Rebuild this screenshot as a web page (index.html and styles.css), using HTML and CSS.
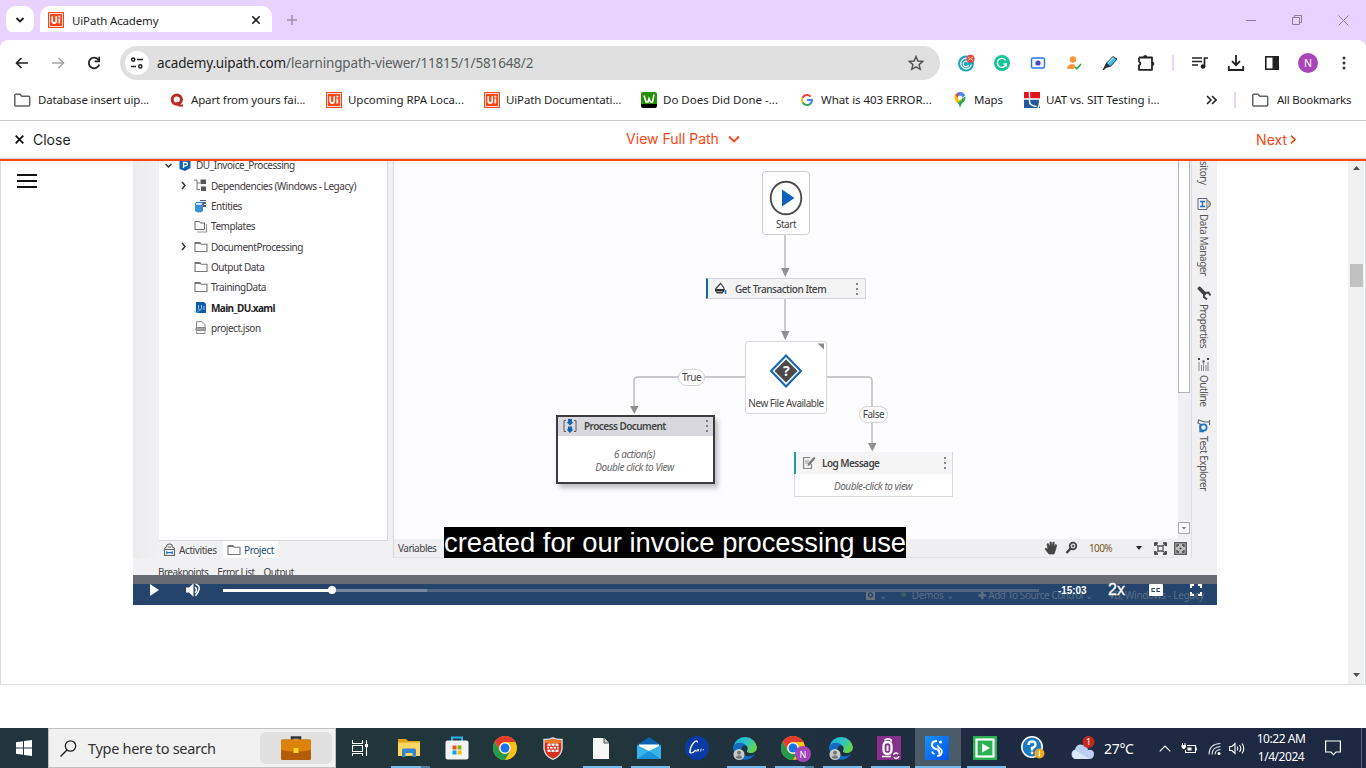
FILE: index.html
```html
<!DOCTYPE html>
<html lang="en">
<head>
<meta charset="utf-8">
<title>UiPath Academy</title>
<link rel="stylesheet" href="styles.css">
</head>
<body>
<svg class="defs" width="0" height="0">
  <defs>
    <symbol id="ui" viewBox="0 0 16 16"><rect width="16" height="16" fill="#fa4616"/><rect x="1.5" y="1.5" width="13" height="13" fill="none" stroke="#fde1d8" stroke-width="1"/><path d="M4.2 4.2v4.9q0 2 2 2t2-2V4.200M11.300 6.600v5" fill="none" stroke="#fff" stroke-width="1.700"/><rect x="10.400" y="3.700" width="1.900" height="1.800" fill="#fff"/></symbol>
    <symbol id="bfolder" viewBox="0 0 18 16"><path d="M1.800 13V3q0-.8.8-.8H7l1.800 2h7q.9 0 .9.900V13q0 .9-.9.900H2.600q-.8 0-.8-.9Z" fill="none" stroke="#5f6368" stroke-width="1.500"/></symbol>
    <symbol id="folder" viewBox="0 0 14 12"><path d="M1 10.500v-9h5l1.200 1.800H13v7.200Z" fill="none" stroke="#777" stroke-width="1.100"/><path d="M1 1.500h5l1 1.500H1Z" fill="#777"/></symbol>
    <symbol id="chrome" viewBox="0 0 24 24"><circle cx="12" cy="12" r="12" fill="#fbc116"/><path d="M1.600 6A12 12 0 0 1 22.400 6H12a6 6 0 0 0-5.200 9Z" fill="#e33b2e"/><path d="M1.600 6A12 12 0 0 0 12 24l5.200-9A6 6 0 0 1 6.800 15Z" fill="#229a4c"/><circle cx="12" cy="12" r="5.700" fill="#fff"/><circle cx="12" cy="12" r="4.500" fill="#1a73e8"/></symbol>
    <linearGradient id="eg" x1="0" y1="0" x2="1" y2=".5"><stop offset="0" stop-color="#26a9e8"/><stop offset=".6" stop-color="#2cc5c0"/><stop offset="1" stop-color="#68d34c"/></linearGradient>
    <linearGradient id="bb" x1="0" y1="0" x2="1" y2="1"><stop offset="0" stop-color="#1494fb"/><stop offset="1" stop-color="#0550e6"/></linearGradient>
    <symbol id="edge" viewBox="0 0 24 24"><path d="M.5 10A12 12 0 0 1 24 11c0 4-3 6-6.500 6-3 0-4-1.200-3.500-2.200 1.500-2 .6-6-3.500-6C6 8.800 3 12 1 17Z" fill="url(#eg)"/><path d="M.3 10C3 5.500 11 6 13 9.500 8 8.500 7 15 11 18.500c3.500 3 8 1.500 11-.5C19 23 14 24.500 9 23.500 2.500 22 0 16 .3 10Z" fill="#146cc0"/><circle cx="6" cy="18.500" r="5.500" fill="#c9c9c9"/><circle cx="6" cy="16.800" r="2" fill="#777"/><path d="M2.500 21.500q3.500-4.500 7 0-3.500 2.500-7 0Z" fill="#777"/></symbol>
    <symbol id="dots" viewBox="0 0 4 14"><circle cx="2" cy="2" r=".9" fill="#555"/><circle cx="2" cy="7" r=".9" fill="#555"/><circle cx="2" cy="12" r=".9" fill="#555"/></symbol>
  </defs>
</svg>

<header class="tabstrip">
  <button class="tab-search"><svg width="10" height="8" viewBox="0 0 10 8"><path d="M1.500 2 5 5.500 8.500 2" fill="none" stroke="#1f1f1f" stroke-width="1.900"/></svg></button>
  <div class="tab">
    <svg width="16" height="16"><use href="#ui"/></svg>
    <span class="tab-title">UiPath Academy</span>
    <svg class="tab-x" width="10" height="10" viewBox="0 0 10 10"><path d="m1.300 1.300 7.400 7.400m0-7.400L1.300 8.700" stroke="#222" stroke-width="1.600"/></svg>
  </div>
  <svg class="newtab" width="10" height="10" viewBox="0 0 10 10"><path d="M5 0v10M0 5h10" stroke="#9a8eaa" stroke-width="1.500"/></svg>
  <div class="winbtns">
    <svg width="10" height="11" viewBox="0 0 10 11"><path d="M0 5.500h10" stroke="#8a7f97"/></svg>
    <svg width="10" height="11" viewBox="0 0 10 11"><path d="M.5 2.500h7v7h-7ZM2.500 2.500v-2h7v7h-2" fill="none" stroke="#8a7f97"/></svg>
    <svg width="11" height="11" viewBox="0 0 11 11"><path d="m.5.5 10 10m0-10-10 10" stroke="#8a7f97"/></svg>
  </div>
</header>

<div class="toolbar">
  <div class="nav">
    <svg width="14" height="12" viewBox="0 0 14 12"><path d="M13 6H1.500M6.500 1l-5 5 5 5" fill="none" stroke="#222" stroke-width="1.700"/></svg>
    <svg width="14" height="12" viewBox="0 0 14 12"><path d="M1 6h11.500m-5-5 5 5-5 5" fill="none" stroke="#a5a5a8" stroke-width="1.500"/></svg>
    <svg width="14" height="14" viewBox="0 0 14 14"><path d="M12.200 8.500A5.300 5.300 0 1 1 11.500 4" fill="none" stroke="#222" stroke-width="1.800"/><path d="M12.200.8v4.600H7.600" fill="none" stroke="#222" stroke-width="1.700"/></svg>
  </div>
  <div class="omnibox">
    <span class="site"><svg width="14" height="12" viewBox="0 0 14 12"><g fill="none" stroke="#222" stroke-width="1.500"><circle cx="3.200" cy="2.600" r="1.600"/><path d="M7 2.600h6M1 9.400h5"/><circle cx="10.300" cy="9.400" r="1.600"/></g></svg></span>
    <span class="url"><b>academy.uipath.com</b>/learningpath-viewer/11815/1/581648/2</span>
    <svg class="star" width="16" height="16" viewBox="0 0 16 16"><path d="m8 1.500 1.900 4.500 4.900.4-3.700 3.200 1.100 4.700L8 11.800l-4.200 2.500 1.100-4.700L1.200 6.400 6.100 6Z" fill="none" stroke="#555" stroke-width="1.500"/></svg>
  </div>
  <div class="ext">
    <svg width="18" height="18" viewBox="0 0 18 18"><circle cx="9" cy="9.500" r="8" fill="#1aa3bd"/><path d="M11 4.600A5.300 5.300 0 1 0 14.300 10.500" fill="none" stroke="#fff" stroke-width="1.300"/><path d="M11 8a2.800 2.800 0 1 0 .6 3" fill="none" stroke="#fff" stroke-width="1.200"/><circle cx="13.500" cy="4.700" r="4" fill="#e1493b"/><path d="m11 3 5 3.500m-5 0 5-3.500" stroke="#f9b6ac"/></svg>
    <svg width="18" height="18" viewBox="0 0 18 18"><circle cx="9" cy="9" r="8" fill="#15c39a"/><path d="M12.700 6.500A4.500 4.500 0 1 0 13.200 10H10.500M13.200 9.300v3.500" fill="none" stroke="#fff" stroke-width="1.400"/></svg>
    <svg width="18" height="18" viewBox="0 0 18 18"><rect x="2.500" y="4" width="13" height="10" rx="1.500" fill="#f4f8ff" stroke="#2879ed" stroke-width="1.400"/><circle cx="9" cy="9" r="2.600" fill="#4b4ccc"/></svg>
    <svg width="18" height="18" viewBox="0 0 18 18"><circle cx="8" cy="5.500" r="3.200" fill="#ff9838"/><path d="M2 15q0-5 6-5l2 1-1 4Z" fill="#ff9838"/><path d="m9.500 12.500 2.300 2.300L16 10" fill="none" stroke="#25a745" stroke-width="1.500"/></svg>
    <svg width="18" height="18" viewBox="0 0 18 18"><path d="M1.500 16 5 9l7-7 4.500 3-6.500 7.500-5 1.500-2 2Z" fill="#28333c"/><path d="m6 9.500 6.300-6.300 3 2.200-6 6.600Z" fill="#39bfe2"/><path d="m7 9 5.500-5.500" stroke="#a1ecfb" stroke-width="1.300"/></svg>
    <svg width="18" height="18" viewBox="0 0 18 18"><path d="M2 3.500h13v4.500M15 11.500v4.300H2v-4.500a2 2 0 0 0 0-3.800V3.500M15 7v5" fill="none" stroke="#222" stroke-width="1.800" stroke-linejoin="round"/><path d="M6 3.500a2.200 2.500 0 0 1 4.400 0ZM15 7.500a2.300 2.200 0 0 1 0 4.400Z" fill="#222"/></svg>
    <i class="sep"></i>
    <svg width="18" height="18" viewBox="0 0 18 18"><path d="M1 4h10M1 7.500h10M1 11h6M13.500 13V4H17" fill="none" stroke="#222" stroke-width="1.700"/><circle cx="12" cy="12.500" r="2.300" fill="#222"/></svg>
    <svg width="18" height="18" viewBox="0 0 18 18"><path d="M9 1v10M5 7.200l4 4 4-4M1.800 12v4h14.400v-4" fill="none" stroke="#222" stroke-width="1.800"/></svg>
    <svg width="18" height="18" viewBox="0 0 18 18"><rect x="2.800" y="2.800" width="12.400" height="12.400" fill="none" stroke="#222" stroke-width="1.600"/><path d="M9.500 2.500H15v13H9.500Z" fill="#222"/></svg>
    <span class="avatar">N</span>
    <svg width="18" height="18" viewBox="0 0 18 18"><g fill="#333"><circle cx="9" cy="4" r="1.500"/><circle cx="9" cy="9" r="1.500"/><circle cx="9" cy="14" r="1.500"/></g></svg>
  </div>
</div>

<nav class="bookmarks">
  <a class="bm1"><svg width="18" height="16"><use href="#bfolder"/></svg><span>Database insert uip...</span></a>
  <a class="bm2"><svg width="14" height="14" viewBox="0 0 14 14"><circle cx="6.800" cy="6.600" r="4.600" fill="none" stroke="#b92b27" stroke-width="3"/><path d="m7 9 2 3.500h4" fill="none" stroke="#b92b27" stroke-width="2"/></svg><span>Apart from yours fai...</span></a>
  <a class="bm3"><svg width="16" height="16"><use href="#ui"/></svg><span>Upcoming RPA Loca...</span></a>
  <a class="bm4"><svg width="16" height="16"><use href="#ui"/></svg><span>UiPath Documentati...</span></a>
  <a class="bm5"><svg width="16" height="16" viewBox="0 0 16 16"><path d="M0 12V2q0-2 2-2h12q2 0 2 2v10Z" fill="#259008"/><path d="M0 12h16v2q0 2-2 2H2q-2 0-2-2Z"/><path d="M3 3.500 5 10h2l1-3.500 1.500 3.500h2L13 2.500" fill="none" stroke="#fff" stroke-width="1.500"/></svg><span>Do Does Did Done -...</span></a>
  <a class="bm6"><svg width="12" height="12" viewBox="0 0 12 12"><g fill="none" stroke-width="2"><path d="M9.700 2.700A5 5 0 0 0 1.500 3.800" stroke="#ea4335"/><path d="M1.500 3.800a5 5 0 0 0 .2 4.600" stroke="#fbbc05"/><path d="M1.700 8.400a5 5 0 0 0 7.500 1.500" stroke="#34a853"/><path d="M9.200 9.900A5 5 0 0 0 11 6H6" stroke="#4285f4"/></g></svg><span>What is 403 ERROR...</span></a>
  <a class="bm7"><svg width="12" height="16" viewBox="0 0 12 16"><path d="M6 16Q5.500 12.500 2.500 9.500L11.500 4.500Q12 8 8.500 11 6.500 13 6 16Z" fill="#34a853"/><path d="M1.500 8.500Q-.5 5.500 1.200 3L5 6l3 1.500-4.500 3.500Z" fill="#fbbc04"/><path d="M1.200 3Q3 .5 4.500.3L6.500 3 4 6Z" fill="#ea4335"/><path d="M4.300.3Q9-1 11.200 3.500L6.500 7 4.500 4Z" fill="#4285f4"/><circle cx="6" cy="5.700" r="2.200" fill="#fff"/></svg><span>Maps</span></a>
  <a class="bm8"><svg width="16" height="16" viewBox="0 0 16 16"><path d="M0 0h16v7H0Z" fill="#e2131b"/><path d="M0 7h16v9H0Z" fill="#21599b"/><path d="M5.500 0v9q0 5 7 5.500M0 7h16M14 16q2-3 1.500-9" fill="none" stroke="#fff" stroke-width="1.400"/></svg><span>UAT vs. SIT Testing i...</span></a>
  <svg class="more" width="11" height="10" viewBox="0 0 11 10"><path d="m1 1 4 4-4 4m5-8 4 4-4 4" fill="none" stroke="#222" stroke-width="1.600"/></svg>
  <i class="sep"></i>
  <a class="all"><svg width="18" height="16"><use href="#bfolder"/></svg><span>All Bookmarks</span></a>
</nav>

<div class="coursebar">
  <a class="close"><svg width="9" height="9" viewBox="0 0 9 9"><path d="m.7.7 7.600 7.600m0-7.600L.7 8.300" stroke="#111" stroke-width="1.800"/></svg>Close</a>
  <a class="path">View Full Path<svg width="12" height="8" viewBox="0 0 12 8"><path d="m1 1.500 5 5 5-5" fill="none" stroke="#fa4616" stroke-width="1.900"/></svg></a>
  <a class="next">Next<svg width="6" height="9" viewBox="0 0 6 9"><path d="m1 .7 4 3.800-4 3.800" fill="none" stroke="#fa4616" stroke-width="1.600"/></svg></a>
</div>

<main class="viewer">
  <div class="menu"><i></i><i></i><i></i></div>
  <section class="video">
    <div class="studio">
      <div class="gutter"></div>
      <div class="project">
        <ul class="tree">
          <li class="root"><svg class="chev" width="9" height="9" viewBox="0 0 9 9"><path d="m1.500 3 3 3 3-3" fill="none" stroke="#333" stroke-width="1.400"/></svg><svg class="ic" width="12" height="12" viewBox="0 0 12 12"><path d="m6 0 5.500 2v7L6 12 .5 10V2Z" fill="#0d61b0"/><path d="M4.500 9V3.500H6.500q2 0 2 1.700T4.500 7" fill="none" stroke="#fff" stroke-width="1.300"/></svg><span>DU_Invoice_Processing</span></li>
          <li class="dep"><svg class="chev" width="9" height="9" viewBox="0 0 9 9"><path d="m3 1 3 3.500-3 3.500" fill="none" stroke="#333" stroke-width="1.500"/></svg><svg class="ic" width="14" height="13" viewBox="0 0 14 13"><path d="M6.500 .5h5.500v4.500H6.500ZM7 7.500h5v4.500H7Z" fill="#555"/><path d="M0 1h3v9.500h3M3 4h3" fill="none" stroke="#777"/></svg><span>Dependencies (Windows - Legacy)</span></li>
          <li class="ent"><svg class="ic" width="14" height="14" viewBox="0 0 14 14"><path d="M6 1h6v7H6Z" fill="#55606b"/><path d="M1 5q4-4 8 0v7q-4 3-8 0Z" fill="#3d91d5"/><ellipse cx="5" cy="5" rx="4" ry="1.700" fill="#d6eafa" stroke="#3481c4"/><path d="M6 2.500h7m-3 3h3" stroke="#d6eafa"/></svg><span>Entities</span></li>
          <li class="tmp"><svg class="ic" width="14" height="13" viewBox="0 0 14 13"><path d="M3 12h9.500V4" fill="none" stroke="#999" stroke-width="1.200"/><path d="M1 9.500v-8h4.500l1 1.500H10.500v6.500Z" fill="#fff" stroke="#666"/></svg><span>Templates</span></li>
          <li class="doc"><svg class="chev" width="9" height="9" viewBox="0 0 9 9"><path d="m3 1 3 3.500-3 3.500" fill="none" stroke="#333" stroke-width="1.500"/></svg><svg class="ic" width="14" height="12"><use href="#folder"/></svg><span>DocumentProcessing</span></li>
          <li class="out"><svg class="ic" width="14" height="12"><use href="#folder"/></svg><span>Output Data</span></li>
          <li class="trn"><svg class="ic" width="14" height="12"><use href="#folder"/></svg><span>TrainingData</span></li>
          <li class="main"><svg class="ic" width="14" height="13" viewBox="0 0 14 13"><path d="M2 1h8l2 2v9H2Z" fill="#0d5da8"/><path d="M4.500 4v3.500q0 1.500 1.500 1.500t1.500-1.500V4m2.500 1v4" fill="none" stroke="#9cc6ea"/><path d="m0 10 2.500 2 3-3" fill="none" stroke="#8bd0a1"/></svg><span>Main_DU.xaml</span></li>
          <li class="json"><svg class="ic" width="14" height="13" viewBox="0 0 14 13"><path d="M2.500 6V.700H8l3 2.800V6M2.500 10.500v2H11v-2" fill="none" stroke="#888"/><rect x="1.500" y="6" width="10.500" height="4" rx="1" fill="#888"/><path d="M3 8h8" stroke="#ddd" stroke-dasharray="1.500 .8"/></svg><span>project.json</span></li>
        </ul>
        <div class="ptabs">
          <span class="act"><svg width="13" height="14" viewBox="0 0 13 14"><path d="M1.500 6q0-1.500 2-2 0-3 3-3t3 3q2 .5 2 2v6.500h-10Z" fill="#eee" stroke="#666" stroke-width="1.100"/><path d="M2 6.500h9M5 4h3" stroke="#666"/><path d="M3.500 9.700h6M3.700 8.200v3m5.600-3v3" stroke="#2477c0" stroke-width="1.200"/></svg><em>Activities</em></span>
          <span class="prj"><svg width="14" height="12"><use href="#folder"/></svg><em>Project</em></span>
        </div>
      </div>
      <div class="designer">
        <div class="canvas">
          <svg class="wires" width="784" height="380" viewBox="394 161 784 380">
            <g fill="none" stroke="#b7b9c1" stroke-width="1.400"><path d="M785 235v36M785 299v34M745 377H638q-4 0-4 4v26M827 377h41q4 0 4 4v63"/></g>
            <g fill="#8e9093"><path d="M781 268h8.500l-4.200 9ZM781 331h8.500l-4.200 9ZM630 406h8.500l-4.200 8ZM868 443h8.500l-4.200 8.500Z"/></g>
          </svg>
          <div class="node start"><svg width="34" height="36" viewBox="0 0 34 36"><ellipse cx="17" cy="18" rx="15.300" ry="16.300" fill="#fff" stroke="#4b4b4d" stroke-width="1.900"/><path d="M13 9.500 25.500 18 13 26.500Z" fill="#0b62b8"/></svg><span>Start</span></div>
          <div class="node gti"><svg class="nic" width="13" height="13" viewBox="0 0 13 13"><path d="m1.500 7 5-5.500 3.500 4.500v2" fill="none" stroke="#444" stroke-width="1.200"/><path d="M1 7h9.500v2l-2 2.500h-5.500L1 9Z" fill="#333"/><path d="M2.500 9.700h6" stroke="#ccc" stroke-width=".8"/><path d="M11.500 8v4" stroke="#2174bd" stroke-width="1.500"/></svg><span>Get Transaction Item</span><svg class="kebab" width="4" height="14"><use href="#dots"/></svg></div>
          <div class="node decision"><svg class="corner" width="8" height="8"><path d="M.5 1.500H7v6Z" fill="#888a8e"/></svg><svg width="34" height="34" viewBox="0 0 34 34"><path d="M17 1.500 32 17 17 32.500 2 17Z" fill="#eef4fa" stroke="#1764ae" stroke-width="2"/><path d="M17 5.500 28.500 17 17 28.500 5.500 17Z" fill="#4b4b4d"/><text x="17" y="22" text-anchor="middle" class="q">?</text></svg><span>New File Available</span></div>
          <div class="node pill t">True</div>
          <div class="node pill f">False</div>
          <div class="node proc"><div class="nhead"><svg width="14" height="14" viewBox="0 0 14 14"><path d="M3 1.500H1v11h2M11 1.500h2v11h-2" fill="none" stroke="#5a5a5e"/><path d="M5 0h4v3h1.500L7 6.500 3.500 3H5ZM5 7.500h4v3h1.500L7 14l-3.500-3.500H5Z" fill="#1764ae"/></svg><b>Process Document</b><svg class="kebab" width="4" height="14"><use href="#dots"/></svg></div><div class="nbody"><i class="a6">6 action(s)</i><i class="dc">Double click to View</i></div></div>
          <div class="node log"><div class="nhead"><svg width="14" height="14" viewBox="0 0 14 14"><path d="M8 1.500H1.500v11h8V8" fill="#eee" stroke="#888" stroke-width="1.200"/><path d="M3 5h4M3 7h3" stroke="#999"/><path d="m5.500 10 .8-3L12 .8l1.500 1.500L8 9Z" fill="#777"/></svg><b>Log Message</b><svg class="kebab" width="4" height="14"><use href="#dots"/></svg></div><div class="nbody"><i class="dcv">Double-click to view</i></div></div>
        </div>
        <div class="dbar">
          <span class="vars">Variables</span>
          <div class="zoomtools">
            <svg width="14" height="14" viewBox="0 0 14 14"><path d="M5 13 1 8l1-1 2 1.500L3 3l1.200-.5L6 6V1h1.200L8 6l1-5 1.200.3L10 6.500l1.500-3 1.200.5L11.500 9l-1.500 4Z" fill="#444" stroke="#444" stroke-width=".7"/></svg>
            <svg width="14" height="14" viewBox="0 0 14 14"><circle cx="8" cy="5" r="3.300" fill="#ddd" stroke="#444" stroke-width="1.700"/><circle cx="8" cy="5" r="1.200" fill="#666"/><path d="m1.500 12 4-4.500" stroke="#444" stroke-width="2.400"/></svg>
            <span class="pct">100%</span>
            <svg class="dd" width="6" height="4"><path d="M0 0h6L3 4Z" fill="#222"/></svg>
            <svg width="13" height="13" viewBox="0 0 13 13"><path d="M1 4V1h3m5 0h3v3m0 5v3H9M4 12H1V9" fill="none" stroke="#333" stroke-width="1.700"/><path d="M4 4h5v5H4ZM2 2l2 2m7-2L9 4m2 7L9 9m-7 2 2-2" fill="none" stroke="#555" stroke-width="1.300"/></svg>
            <svg width="13" height="13" viewBox="0 0 13 13"><rect x=".7" y=".7" width="11.600" height="11.600" fill="#bbb" stroke="#555" stroke-width="1.300"/><path d="M3 5V3h2m3 0h2v2m0 3v2H8m-3 0H3V8" fill="none" stroke="#444" stroke-width="1.300"/><circle cx="6.500" cy="6.500" r="1" fill="#444"/></svg>
          </div>
        </div>
      </div>
      <div class="vscroll"><div class="vthumb"></div><svg width="12" height="12" viewBox="0 0 12 12"><rect x=".5" y=".5" width="11" height="11" fill="#fafafa" stroke="#aaa"/><path d="M3.500 5h5L6 7.500Z" fill="#888"/></svg></div>
      <aside class="side">
        <span class="s0">sitory</span>
        <svg width="14" height="14" viewBox="0 0 14 14"><path d="M1 1.500h9v11H1Z" fill="#eef3f8" stroke="#667" /><path d="M10 3.500q3.500 0 3.500 3.500T10 10.500" fill="#bbb" stroke="#777"/><path d="M3 4.500h5M3 9.500h5M5.500 4.500v5" stroke="#2174bd" stroke-width="1.400"/></svg>
        <span class="s1">Data Manager</span>
        <svg width="14" height="14" viewBox="0 0 14 14"><path d="m2.500 2.500 5 5" stroke="#444" stroke-width="3.800" stroke-linecap="round"/><path d="M7 7v4l3 2.500M7.500 7l4-.5 2 3" fill="none" stroke="#444" stroke-width="2"/></svg>
        <span class="s2">Properties</span>
        <svg width="14" height="14" viewBox="0 0 14 14"><path d="M2 4v9M6.500 5v8M11 4v9M4.500 7v6M9 7v6" stroke="#888"/><path d="M1 0h2v2H1ZM5.500 2.500h2v2h-2ZM10 0h2v2h-2Z" fill="#444"/></svg>
        <span class="s3">Outline</span>
        <svg width="14" height="14" viewBox="0 0 14 14"><path d="M12.500 1v5M12.500 3H8L1.500 1 1 4l4 2" fill="none" stroke="#666" stroke-width="1.200"/><circle cx="6.500" cy="8.500" r="3.200" fill="none" stroke="#2174bd" stroke-width="1.700"/><path d="M3 5.500v7h4" fill="none" stroke="#2174bd" stroke-width="1.300"/></svg>
        <span class="s4">Test Explorer</span>
      </aside>
    </div>
    <div class="paneltabs"><span>Breakpoints</span><span>Error List</span><span>Output</span></div>
    <div class="caption">created for our invoice processing use</div>
    <div class="controls">
      <div class="shade"></div>
      <div class="status"><span class="st1"><svg width="9" height="10"><rect width="9" height="10" fill="#67747f"/><circle cx="4.500" cy="5" r="2" fill="none" stroke="#24446b" stroke-width="1.300"/></svg>⌄</span><span class="st2"><i></i>Demos ⌄</span><span class="st3"><b>✚</b>Add To Source Control ⌄</span><span class="st4">VB, Windows - Legacy</span></div>
      <div class="buttons">
        <svg class="play" width="9" height="12"><path d="M0 0 9 6 0 12Z" fill="#fff"/></svg>
        <svg class="vol" width="15" height="14" viewBox="0 0 15 14"><path d="M0 4.500h3L7.500.3v13.400L3 9.500H0Z" fill="#fff"/><path d="M9 4q3 3 0 6M9.500 1.200q7.500 1.800 0 11.600" fill="none" stroke="#fff" stroke-width="1.500"/></svg>
        <div class="progress"><div class="buffered"></div><div class="played"></div><i class="knob"></i></div>
        <span class="time">-15:03</span>
        <span class="rate">2x</span>
        <svg class="cc" width="14" height="12" viewBox="0 0 14 12"><rect width="14" height="12" rx="1" fill="#fff"/><path d="M6 4.500H3v3h3M11 4.500H8v3h3" fill="none" stroke="#28466b" stroke-width="1.100"/></svg>
        <svg class="fs" width="12" height="12" viewBox="0 0 12 12"><path d="M1 4V1h3m4 0h3v3m0 4v3H8m-4 0H1V8" fill="none" stroke="#fff" stroke-width="2"/></svg>
      </div>
    </div>
  </section>
  <div class="scrollbar"><svg width="7" height="4"><path d="M0 4h7L3.500 0Z" fill="#505050"/></svg><i></i><svg class="dn" width="7" height="4"><path d="M0 0h7L3.500 4Z" fill="#505050"/></svg></div>
</main>

<footer class="taskbar">
  <div class="win"><svg width="16" height="16" viewBox="0 0 16 16"><path d="M0 2.200 7 1.200v6.300H0ZM8 1l8-1v7.500H8ZM0 8.500h7v6.300l-7-1ZM8 8.500h8V16l-8-1Z" fill="#fff"/></svg></div>
  <div class="search">
    <svg width="17" height="17" viewBox="0 0 17 17"><circle cx="10.500" cy="6" r="5.200" fill="none" stroke="#222" stroke-width="1.300"/><path d="M7 10 .5 16.500" stroke="#222" stroke-width="1.400"/></svg>
    <span>Type here to search</span>
    <div class="case"><svg width="30" height="24" viewBox="0 0 30 24"><path d="M11 4V1.500h8V4" fill="none" stroke="#333" stroke-width="2.600"/><rect y="3.500" width="30" height="20.500" rx="1.500" fill="#b45d09"/><path d="M1 3.500h28q1 0 1 1V14q-15 3-30 0V4.500q0-1 1-1Z" fill="#dd830c"/><rect x="12.500" y="12" width="5" height="5" fill="#ffd52c"/></svg></div>
  </div>
  <div class="apps">
    <div class="app tv"><svg width="16" height="16" viewBox="0 0 16 16"><path d="M.5 0v3.500h10V0M.5 5.500h10v6H.5ZM.5 16v-2.500h10V16M14.500 0v16" fill="none" stroke="#fff" stroke-width="1.100"/><path d="M13 4h3v3h-3Z" fill="#fff"/></svg></div>
    <div class="app open split"><svg width="22" height="20" viewBox="0 0 22 20"><path d="M0 1h8l2 2h12v15H0Z" fill="#e4a216"/><path d="M0 4.500h22V18H0Z" fill="#ffd75e"/><path d="M4 19v-7q0-1.500 1.500-1.500h11q1.500 0 1.500 1.500v7h-3.500v-4h-7v4Z" fill="#3585cf"/></svg></div>
    <div class="app"><svg width="24" height="24" viewBox="0 0 24 24"><path d="M7 5V1.500h10V5" fill="none" stroke="#28b4ec" stroke-width="2"/><rect x=".5" y="4.500" width="23" height="19" rx="2" fill="#f3f3f3"/><path d="M7.500 9.500h4v4h-4Z" fill="#f25022"/><path d="M12.500 9.500h4v4h-4Z" fill="#7fba00"/><path d="M7.500 14.500h4v4h-4Z" fill="#00a4ef"/><path d="M12.500 14.500h4v4h-4Z" fill="#ffb900"/></svg></div>
    <div class="app"><svg width="24" height="24"><use href="#chrome"/></svg></div>
    <div class="app"><svg width="20" height="23" viewBox="0 0 20 23"><path d="M10 .8q4 2 9 1.700v9Q18.500 19 10 22.300 1.500 19 1 11.500v-9q5 .3 9-1.700Z" fill="#d2301a" stroke="#ddd" stroke-width="1.400"/><path d="M2 3.500q5 0 8-1.700 3 1.700 8 1.700V6H2Z" fill="#ee7b22"/><rect x="4.500" y="6.500" width="11" height="8.500" rx="1" fill="#fff"/><path d="M4.500 9.300h11M4.500 12.100h11M8 6.500v2.800m4-2.800v2.800M6.500 9.300v2.800m3.500-2.800v2.800m3.500-2.800v2.800M8 12.100V15m4-2.900V15" stroke="#d2301a"/></svg></div>
    <div class="app open"><svg width="16" height="21" viewBox="0 0 16 21"><path d="M0 0h11l5 5v16H0Z" fill="#f7f7f7"/><path d="M11 0v5h5" fill="#ccc" stroke="#555"/></svg></div>
    <div class="app open"><svg width="24" height="22" viewBox="0 0 24 22"><path d="M0 8 12 0l12 8v5H0Z" fill="#0a64ac"/><path d="M2 7.500h20V14L12 16 2 14Z" fill="#fff"/><path d="m0 8 12 6 12-6v14H0Z" fill="#35b4ed"/><path d="m0 22 12-8 12 8Z" fill="#1c93d9"/></svg></div>
    <div class="app"><svg width="24" height="24" viewBox="0 0 24 24"><circle cx="12" cy="12" r="12" fill="#0a3aa3"/><path d="M12.500 6.500Q12 3 8.500 7T5 16.500q2 1.500 6-2.500" fill="none" stroke="#fff" stroke-width="1.400"/><path d="m12.500 13-.8 2.500 2-2.200-.4 2.200m3-3-.8 3m2-1.500 1.500-.5" fill="none" stroke="#fff" stroke-width=".8"/></svg></div>
    <div class="app open"><svg width="24" height="24"><use href="#edge"/></svg></div>
    <div class="app open split badge"><svg width="24" height="24"><use href="#chrome"/></svg><span>N</span></div>
    <div class="app open"><svg width="24" height="24"><use href="#edge"/></svg></div>
    <div class="app open"><svg width="24" height="24" viewBox="0 0 24 24"><rect width="24" height="24" fill="#85308a"/><path d="M7.500 4.500Q9 2.500 12 3t2 2.500M5 20.500h9" fill="none" stroke="#fff" stroke-width="1.700"/><path d="M6.500 10q0-4 4-4t4 4v3.500q0 4.500-4 4.500t-4-4.500Z" fill="none" stroke="#fff" stroke-width="2.300"/><path d="M10.500 9.500v5.500" stroke="#fff" stroke-width="2"/><path d="M16.500 19a2.600 2.600 0 0 1 4.800-.8M21.800 20a2.600 2.600 0 0 1-4.800 1.200" fill="none" stroke="#fff" stroke-width="1.500"/></svg></div>
    <div class="app open active"><svg width="24" height="24" viewBox="0 0 24 24"><rect width="24" height="24" fill="url(#bb)"/><path d="M12 5Q7 5 7 8.500t4 4.500 3.500 5.500" fill="none" stroke="#fff" stroke-width="2"/><path d="M12.500 9q.5 2.500 3 4t.5 5.500q-1 1.500-4 1.500M7 15.500q.5 2 2.500 2.500" fill="none" stroke="#fff" stroke-width="1.700"/><circle cx="15.500" cy="6" r="1.500" fill="#fff"/></svg></div>
    <div class="app open"><svg width="24" height="24" viewBox="0 0 24 24"><rect width="24" height="24" fill="#2ab152"/><rect x="3.500" y="3.500" width="17" height="17" fill="none" stroke="#fff" stroke-width="2.200"/><path d="m9 7.500 8 4.500-8 4.500Z" fill="#fff"/></svg></div>
    <div class="app"><svg width="24" height="24" viewBox="0 0 24 24"><circle cx="11" cy="11" r="10.200" fill="#1a7bc0" stroke="#fff" stroke-width="1.600"/><path d="M7.500 9Q7.500 5.500 11 5.500t3.500 3Q14.500 11 11 12v2.500" fill="none" stroke="#fff" stroke-width="2.400"/><circle cx="11" cy="17" r="1.400" fill="#fff"/><circle cx="18.500" cy="17.500" r="5" fill="#efa91b"/><path d="M18.500 14.500v6" stroke="#fff" stroke-width="1.400"/></svg></div>
  </div>
  <div class="tray">
    <svg class="wx" width="26" height="24" viewBox="0 0 26 24"><path d="M5 23a5 5 0 0 1 0-9.500Q7 7 13 9q4 0 5 5 6-1 6 4.500-.5 4.500-5 4.500Z" fill="#bccff2"/><path d="M5 23a5 5 0 0 1 0-9l14 9Z" fill="#dce7fa"/><circle cx="18.500" cy="6" r="6" fill="#c4291c"/><text x="18.500" y="9" text-anchor="middle" class="wxn">1</text></svg>
    <span class="temp">27°C</span>
    <svg class="up" width="12" height="7" viewBox="0 0 12 7"><path d="m.7 6.300 5.300-5.300 5.300 5.300" fill="none" stroke="#fff" stroke-width="1.200"/></svg>
    <svg class="bat" width="16" height="11" viewBox="0 0 16 11"><path d="M6 2.500h8.500v7H4.500V7M15.300 4.500v3" fill="none" stroke="#fff" stroke-width="1.100"/><path d="M6.500 4.500h4v3h-4ZM.5 2h4.500v2L3.500 6H2L.5 4Z" fill="#fff"/><path d="M1.500 0v2m2.500-2v2" stroke="#fff"/></svg>
    <svg class="wifi" width="13" height="13" viewBox="0 0 13 13"><g fill="none" stroke="#dde1e6" stroke-width="1.100"><path d="M1 12.500Q1 2 12.500 1.500M4 12.500Q4 5 12.500 4.500M7 12.500Q7 8 12.500 7.500"/></g><circle cx="11" cy="11.500" r="1.500" fill="#fff"/></svg>
    <svg class="spk" width="16" height="13" viewBox="0 0 16 13"><path d="M.6 4.500H3l3-3v10l-3-3H.6ZM8 4.500q1.500 2 0 4M10.500 3q2.500 3.500 0 7M13 1.500q3.500 5 0 10" fill="none" stroke="#fff" stroke-width="1.100"/></svg>
    <div class="clock"><span class="c1">10:22 AM</span><span class="c2">1/4/2024</span></div>
    <svg class="note" width="16" height="16" viewBox="0 0 16 16"><path d="M.6 1h14.800v11H11l-2.500 2.600L6 12H.6Z" fill="none" stroke="#fff" stroke-width="1.200"/></svg>
    <i class="peek"></i>
  </div>
</footer>
</body>
</html>
```
FILE: styles.css
```css
* { box-sizing: border-box; }
html, body { margin: 0; height: 768px; overflow: hidden; }
body { display: flex; flex-direction: column; background: #fff; font-family: "Noto Sans", "Open Sans", sans-serif; font-size: 11.5px; color: #1f1f1f; }
svg { display: block; flex: none; }
span, a, em, b { white-space: nowrap; }
em { font-style: normal; }
.defs { position: absolute; }

.tabstrip { height: 40px; flex: none; display: flex; align-items: flex-start; background: #e8d3ff; padding: 6px 11px 0 6px; }
.tab-search { width: 28px; height: 28px; border: 0; border-radius: 10px; background: #fff; display: grid; place-items: center; padding: 0; }
.tab { width: 232px; height: 34px; margin-left: 6px; background: #fff; border-radius: 10px 10px 0 0; display: flex; align-items: center; padding: 0 11px 6px 8px; }
.tab-title { margin-left: 8px; flex: 1; letter-spacing: -0.15px; }
.newtab { margin: 9px 0 0 15px; }
.winbtns { margin-left: auto; display: flex; gap: 36px; padding-top: 9px; padding-right: 6px; }

.toolbar { height: 46px; flex: none; display: flex; align-items: center; background: #fff; padding: 0 13px 0 15px; border-radius: 8px 8px 0 0; box-shadow: 0 -8px 0 #e8d3ff; }
.nav { display: flex; flex: none; align-items: center; gap: 22px; width: 105px; }
.omnibox { width: 820px; flex: none; height: 34px; border-radius: 17px; background: #e0e0e0; display: flex; align-items: center; padding: 0 16px 0 5px; }
.site { width: 24px; height: 24px; border-radius: 50%; background: #fff; display: grid; place-items: center; }
.url { margin-left: 8px; flex: 1; font-size: 13.5px; color: #5c5f62; letter-spacing: -0.16px; }
.url b { font-weight: 400; color: #1f1f1f; }
.ext { display: flex; align-items: center; margin-left: 17px; gap: 18px; }
.sep { width: 2px; height: 16px; background: #e8d3ff; }
.ext .sep { margin: 0 -1px; flex: none; }
.avatar { width: 20px; height: 20px; margin: 0 -1px; border-radius: 50%; background: #a846b9; color: #fff; display: grid; place-items: center; font-size: 10.5px; }

.bookmarks { height: 35px; flex: none; display: flex; align-items: center; padding: 0 14px 7px 13px; border-bottom: 1px solid #c9c9c9; }
.bookmarks a { display: flex; align-items: center; gap: 7px; letter-spacing: -0.15px; }
.bookmarks .bm1 { width: 157px; }
.bookmarks .bm2 { width: 156px; }
.bookmarks .bm3 { width: 158px; gap: 6px; letter-spacing: -0.05px; }
.bookmarks .bm4 { width: 157px; gap: 6px; }
.bookmarks .bm5 { width: 160px; gap: 6px; letter-spacing: 0; }
.bookmarks .bm6 { width: 153px; gap: 8px; letter-spacing: -0.05px; }
.bookmarks .bm7 { width: 70px; gap: 8px; }
.bookmarks .bm8 { width: 182px; gap: 6px; letter-spacing: -0.08px; }
.bookmarks .all { gap: 7px; letter-spacing: -0.25px; margin-left: -1px; }
.bookmarks .all span { padding-left: 1px; }
.bookmarks .sep { margin: 0 16px 0 17px; }

.coursebar { height: 40px; flex: none; display: flex; align-items: center; justify-content: space-between; border-bottom: 2px solid #fa4616; box-shadow: inset 0 -1px 0 #d4d8da; font-family: Inter, sans-serif; font-size: 14px; color: #fa4616; padding: 0 70px 2px 15px; }
.close { display: flex; align-items: center; gap: 9px; color: #1a1f24; width: 150px; }
.path { display: flex; align-items: center; gap: 9px; padding-left: 55px; padding-bottom: 1px; }
.next { display: flex; align-items: center; justify-content: flex-end; gap: 3px; width: 150px; }

.viewer { height: 524px; flex: none; display: flex; border: 1px solid #dadce0; border-top: 0; }
.menu { width: 132px; padding: 13px 0 0 16px; display: flex; flex-direction: column; gap: 4px; }
.menu i { width: 20px; height: 2px; background: #111; }
.video { width: 1084px; height: 444px; position: relative; overflow: hidden; background: #f1f0f2; color: #444; font-size: 10px; }
.studio { display: flex; height: 397px; }
.gutter { width: 26px; background: linear-gradient(90deg, #ececee, #f1f0f2); }
.project { width: 234px; display: flex; flex-direction: column; }
.tree { list-style: none; width: 229px; height: 380px; margin: 0; padding: 0; background: #fefefe; border-right: 1px solid #d8d8dc; border-bottom: 1px solid #d8d8dc; overflow: hidden; letter-spacing: -0.45px; color: #3e3a42; }
.tree li { height: 20.35px; display: flex; align-items: center; padding-left: 35px; gap: 3px; }
.tree li.root { margin-top: -6px; padding-left: 5px; gap: 5px; }
.tree .root .ic { margin-left: 1px; }
.tree .dep, .tree .doc { padding-left: 20px; }
.tree .dep .chev, .tree .doc .chev { margin-right: 3px; }
.tree .main { font-weight: 700; color: #222; letter-spacing: -0.6px; }
.ptabs { display: flex; height: 17px; letter-spacing: -0.4px; }
.ptabs span { display: flex; align-items: center; gap: 3px; }
.act { width: 64px; padding-left: 4px; }
.prj { width: 55px; background: #fefefe; padding-left: 4px; color: #234c77; }
.designer { width: 785px; display: flex; flex-direction: column; border-left: 1px solid #d8d8dc; }
.canvas { height: 378px; background: #fdfcfe; position: relative; }
.wires { position: absolute; left: 0; top: 0; }
.node { position: absolute; letter-spacing: -0.45px; }
.start { left: 368px; top: 10px; width: 48px; height: 64px; border: 1px solid #ccd0d4; border-radius: 4px; background: #fff; display: flex; flex-direction: column; align-items: center; padding-top: 8px; line-height: 17px; }
.gti { left: 312px; top: 117px; width: 160px; height: 21px; border: 1px solid #d3d6d9; border-left: 2px solid #1764ae; background: #f3f3f4; display: flex; align-items: center; padding: 0 6px; font-weight: 500; }
.gti span { margin-left: 8px; flex: 1; }
.decision { left: 351px; top: 180px; width: 82px; height: 73px; border: 1px solid #d6d8dc; border-radius: 3px; background: #fff; display: flex; flex-direction: column; align-items: center; padding-top: 12px; line-height: 30px; letter-spacing: -0.5px; }
.corner { position: absolute; right: 1px; top: 0; }
.q { font: 700 14px "Noto Sans", sans-serif; fill: #fff; }
.pill { border: 1px solid #cfd1d6; border-radius: 9px; background: #fff; display: grid; place-items: center; height: 17px; line-height: 14px; padding-bottom: 1px; }
.t { left: 284px; top: 208px; width: 27px; }
.f { left: 465px; top: 245px; width: 29px; }
.nhead { display: flex; align-items: center; }
.nhead b { flex: 1; margin-left: 7px; font-weight: 600; letter-spacing: -0.55px; }
.nbody { display: flex; flex-direction: column; align-items: center; }
.nbody i { line-height: 12.500px; color: #666; white-space: nowrap; }
.proc { left: 162px; top: 254px; width: 159px; height: 69px; border: 2px solid #3c3c40; background: #fff; box-shadow: 3px 4px 5px rgba(0,0,0,.25); }
.proc .nhead { height: 19px; background: #d8d8de; padding: 0 4px 1px 5px; }
.proc .nbody { padding: 12px 2px 0 0; }
.log { left: 400px; top: 291px; width: 159px; height: 45px; border: 1px solid #d6dadc; background: #fff; }
.log .nhead { height: 22px; background: #f5f5f6; border-left: 2px solid #2a97a4; margin: -1px 0 0 -1px; padding: 0 5px 0 6px; }
.log .nhead b { margin-left: 6px; }
.log .nbody { padding: 6px 1px 0 0; }
.dbar { height: 19px; display: flex; align-items: center; justify-content: space-between; background: #efeff1; border-bottom: 1px solid #e2e2e4; }
.vars { padding-left: 4px; letter-spacing: -0.5px; }
.zoomtools { display: flex; align-items: center; gap: 7px; margin-right: -9px; }
.pct { width: 40px; margin-left: 3px; color: #7c5226; letter-spacing: -0.6px; }
.dd { margin-right: 5px; }
.vscroll { width: 13px; height: 378px; background: #f0eff1; display: flex; flex-direction: column; justify-content: space-between; padding-bottom: 5px; }
.vthumb { width: 12px; height: 232px; background: #fff; border: 1px solid #b5b5b9; border-top: 0; }
.side { width: 26px; display: flex; flex-direction: column; align-items: center; border-left: 1px solid #dedee2; padding-right: 1px; font-size: 10px; color: #555; }
.side span { writing-mode: vertical-rl; line-height: 14px; letter-spacing: -0.45px; }
.side .s0 { height: 36px; }
.side .s1 { height: 75px; padding-top: 3px; }
.side .s2 { height: 58px; padding-top: 4px; }
.side .s3 { height: 47px; padding-top: 3px; }
.side .s4 { padding-top: 3px; }
.paneltabs { display: flex; gap: 9px; padding: 7px 0 0 25px; letter-spacing: -0.55px; }
.caption { position: absolute; left: 311px; top: 366px; height: 31px; background: #000; color: #fff; font: 27.35px/32px "Liberation Sans", Arial, sans-serif; white-space: nowrap; }
.controls { position: absolute; left: 0; right: 0; bottom: 0; height: 30px; background: #24446b; }
.shade { height: 9px; background: #686b72; }
.status { display: flex; align-items: center; justify-content: flex-end; height: 21px; padding-right: 13px; color: #5a6f87; font-size: 10px; }
.status span { display: flex; align-items: center; gap: 4px; }
.status .st1 { width: 35px; }
.status .st2 { width: 77px; letter-spacing: -0.25px; gap: 6px; }
.status .st3 { width: 131px; letter-spacing: -0.45px; gap: 3px; }
.status .st4 { letter-spacing: -0.3px; }
.st2 i { width: 5px; height: 5px; border-radius: 50%; background: #366057; }
.buttons { position: absolute; inset: 0; display: flex; align-items: center; color: #fff; padding-left: 17px; }
.vol { margin-left: 27px; }
.progress { width: 816px; height: 3px; margin-left: 22px; background: #506580; position: relative; }
.buffered, .played { position: absolute; left: 0; top: 0; height: 3px; }
.buffered { width: 204px; background: #79889e; }
.played { width: 109px; background: #fff; }
.knob { position: absolute; left: 105px; top: -3px; width: 8px; height: 8px; border-radius: 50%; background: #fff; }
.time { margin-left: 19px; width: 50px; font: 700 10px "Liberation Sans", sans-serif; letter-spacing: -0.05px; }
.rate { font: 16px "Liberation Sans", sans-serif; width: 41px; -webkit-text-stroke: 0.3px #fff; }
.fs { margin-left: 27px; }
.scrollbar { width: 17px; margin-left: auto; background: #f1f1f1; border-right: 1px solid #fff; display: flex; flex-direction: column; align-items: center; padding: 5px 0 7px; }
.scrollbar i { width: 13px; height: 23px; background: #c1c1c1; margin-top: 94px; }
.dn { margin-top: auto; }

.taskbar { height: 40px; flex: none; margin-top: 43px; display: flex; background: linear-gradient(90deg, #20363c 0, #20363b 45%, #1e2b41 70%, #1d2843); color: #fff; }
.win { width: 48px; display: grid; place-items: center; }
.search { width: 288px; background: #f1f1f1; border: 1px solid #c0c0c0; display: flex; align-items: center; color: #333; font-size: 14.5px; padding: 0 3px 0 11px; }
.search span { margin-left: 11px; flex: 1; letter-spacing: -0.3px; }
.case { width: 72px; height: 32px; border-radius: 6px; background: #e1e1e1; display: grid; place-items: center; }
.apps { display: flex; }
.app { width: 48px; display: grid; place-items: center; position: relative; }
.app.tv { width: 49px; padding-right: 1px; }
.open::after { content: ""; position: absolute; left: 6px; right: 3px; bottom: 0; height: 2px; background: #76b9ed; }
.split::after { background: linear-gradient(90deg, #76b9ed 30px, #4f7e9e 30px); }
.active { background: linear-gradient(90deg, transparent 2px, #4a5b67 2px 48px); }
.active::after { left: 2px; right: 0; }
.badge span { position: absolute; left: 26px; top: 18px; width: 16px; height: 16px; border-radius: 50%; background: #a544b8; font-size: 9px; display: grid; place-items: center; }
.tray { flex: 1; display: flex; align-items: center; padding-left: 13px; }
.wxn { font: 9px "Noto Sans", sans-serif; fill: #fff; }
.temp { margin-left: 8px; width: 55px; font-size: 14px; letter-spacing: -0.3px; }
.bat { margin-left: 10px; }
.wifi { margin-left: 11px; }
.spk { margin-left: 8px; }
.clock { width: 64px; margin-left: 4px; display: flex; flex-direction: column; align-items: center; font-size: 12px; line-height: 18px; letter-spacing: -0.45px; }
.note { margin-left: 12px; }
.peek { width: 1px; height: 40px; margin: 0 4px 0 auto; background: #59637a; }
```
